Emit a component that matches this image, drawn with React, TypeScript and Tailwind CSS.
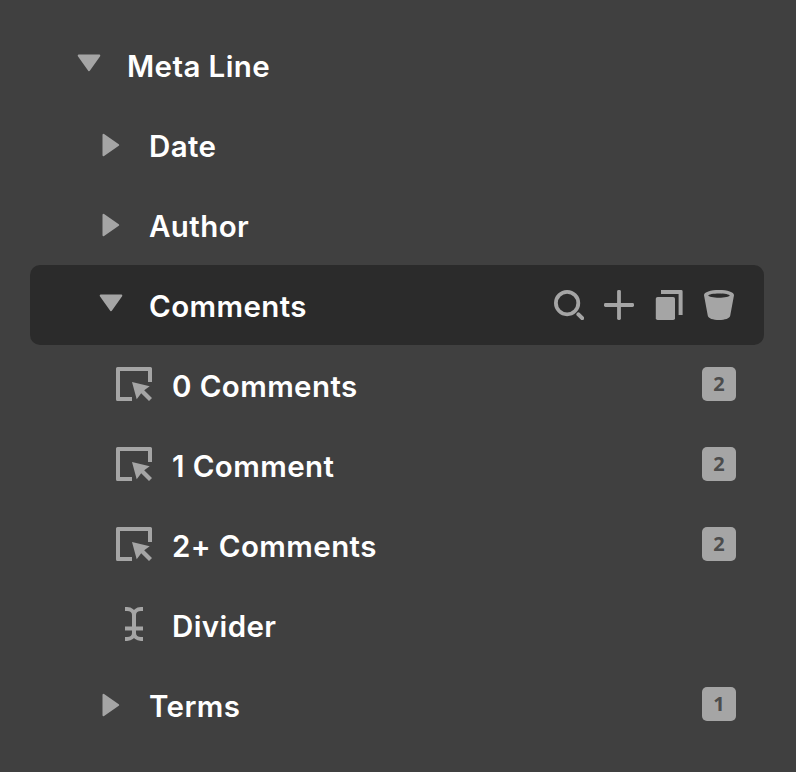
import type { ReactNode } from "react";
import clsx from "clsx";

type IconName = "open" | "closed" | "element" | "text";

type TreeRow = {
  label: string;
  icon: IconName;
  level: number;
  count?: number;
  selected?: boolean;
};

const rows: TreeRow[] = [
  { label: "Meta Line", icon: "open", level: 0 },
  { label: "Date", icon: "closed", level: 1 },
  { label: "Author", icon: "closed", level: 1 },
  { label: "Comments", icon: "open", level: 1, selected: true },
  { label: "0 Comments", icon: "element", level: 2, count: 2 },
  { label: "1 Comment", icon: "element", level: 2, count: 2 },
  { label: "2+ Comments", icon: "element", level: 2, count: 2 },
  { label: "Divider", icon: "text", level: 2 },
  { label: "Terms", icon: "closed", level: 1, count: 1 },
];

const indents = ["pl-[41px]", "pl-[63px]", "pl-[86px]"];

const rowIcons: Record<IconName, ReactNode> = {
  open: <path d="M7.7 8.6H28.3L18 23.2Z" fill="currentColor" stroke="currentColor" strokeWidth="2" strokeLinejoin="round" />,
  closed: <path d="M10.5 7.8V28.2L25.2 18Z" fill="currentColor" stroke="currentColor" strokeWidth="2" strokeLinejoin="round" />,
  element: (
    <>
      <path d="M1.5 0H34.5Q36 0 36 1.5V15H32V4H4V30H16V34H1.5Q0 34 0 32.5V1.5Q0 0 1.5 0Z" fill="currentColor" />
      <path d="M16 15L33.7 19.3L28.2 23.2L36 31L33 34L25.2 26.2L20.7 32.2Z" fill="currentColor" />
    </>
  ),
  text: (
    <path
      d="M9 2H11C15 2 18 4.5 18 8V26C18 29.5 15 32 11 32H9M27 2H25C21 2 18 4.5 18 8V26C18 29.5 21 32 25 32H27M9 21.5H27"
      fill="none"
      stroke="currentColor"
      strokeWidth="4"
    />
  ),
};

function RowActions() {
  return (
    <div className="ml-auto flex gap-5 pr-[30px]">
      <svg className="size-[30px]" viewBox="0 0 30 30" fill="none" stroke="currentColor" strokeWidth="3.8">
        <circle cx="13.1" cy="13.1" r="11.2" />
        <path d="M24.4 24.4L28.2 28.2" strokeWidth="4" strokeLinecap="round" />
      </svg>
      <svg className="size-[30px]" viewBox="0 0 30 30" fill="currentColor">
        <rect x="13.1" width="3.8" height="30" rx="1.4" />
        <rect y="13.1" width="30" height="3.8" rx="1.4" />
      </svg>
      <svg className="size-[30px]" viewBox="0 0 30 30" fill="currentColor">
        <rect x="1.8" y="7" width="19.2" height="23" rx="1.8" />
        <path d="M7 0H27.3Q28.6 0 28.6 1.3V25H24.6V4H7Z" />
      </svg>
      <svg className="size-[30px]" viewBox="0 0 30 30" fill="currentColor">
        <path
          fillRule="evenodd"
          d="M15 0C23.5 0 30 2 30 5.3L26.2 25.8C25.6 28.6 21 30 15 30S4.4 28.6 3.8 25.8L0 5.3C0 2 6.5 0 15 0ZM15 3.4C9.5 3.4 4.3 4.3 4.3 5.5S9.5 7.7 15 7.7S25.7 6.7 25.7 5.5S20.5 3.4 15 3.4Z"
        />
      </svg>
    </div>
  );
}

function Row({ row }: { row: TreeRow }) {
  return (
    <div
      className={clsx(
        "flex h-20 items-center rounded-[10px] text-[#a5a5a5]",
        indents[row.level],
        row.selected && "bg-[#2b2b2b]"
      )}
    >
      <svg className="size-9 shrink-0" viewBox="0 0 36 36">
        {rowIcons[row.icon]}
      </svg>
      <span className="ml-5 pt-px text-[29.5px] leading-9 font-semibold tracking-[0.4px] whitespace-nowrap text-white">
        {row.label}
      </span>
      {row.selected && <RowActions />}
      {row.count !== undefined && (
        <span className="mr-7 mb-0.5 ml-auto flex size-[34px] items-center justify-center rounded-[5px] bg-[#a5a5a5] font-['Open_Sans',sans-serif] text-[20px] leading-none font-bold text-[#4c4c4c]">
          {row.count}
        </span>
      )}
    </div>
  );
}

export default function App() {
  return (
    <div className="h-screen overflow-hidden bg-[#404040] pt-[25px] pr-8 pl-[30px] font-['Inter',sans-serif]">
      {rows.map((row) => (
        <Row key={row.label} row={row} />
      ))}
    </div>
  );
}
